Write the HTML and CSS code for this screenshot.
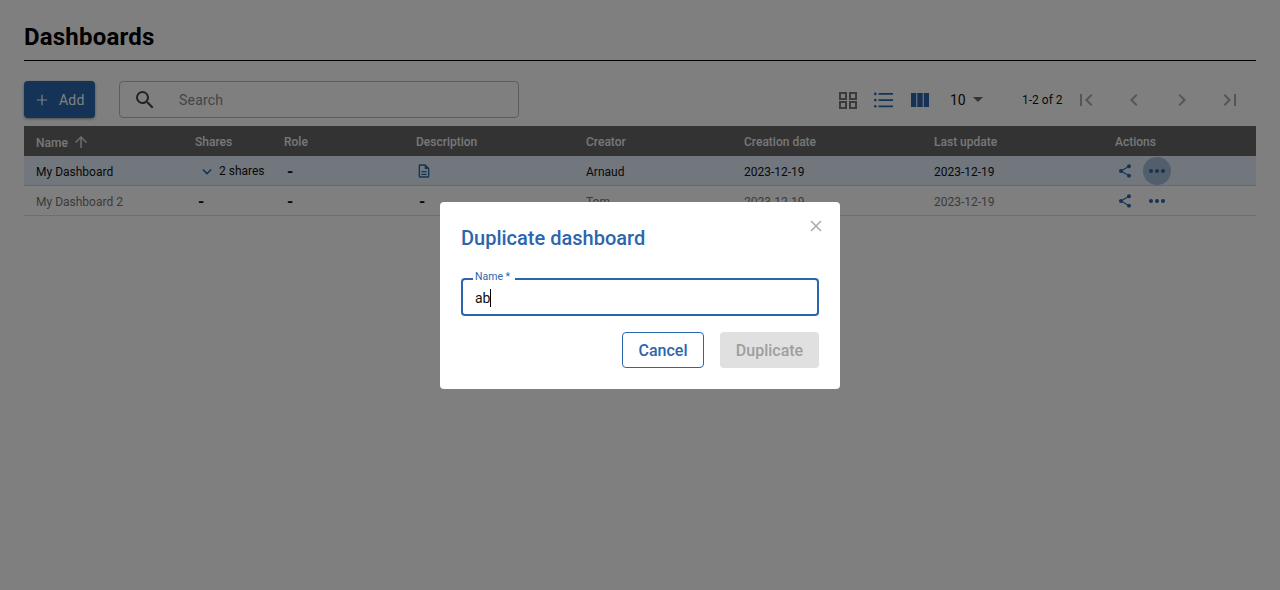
FILE: index.html
```html
<!DOCTYPE html>
<html lang="en">
<head>
    <meta charset="UTF-8">
    <title>Dashboards</title>
    <link rel="stylesheet" href="styles.css">
</head>
<body>
    <main class="page">
        <h1 class="page-title">Dashboards</h1>

        <div class="toolbar">
            <button class="add-btn">
                <svg class="add-icon" viewBox="0 0 14 14"><path d="M7 1v12M1 7h12"/></svg>
                Add
            </button>
            <div class="search">
                <svg class="search-icon" viewBox="0 0 24 24"><path d="M15.5 14h-.79l-.28-.27A6.47 6.47 0 0 0 16 9.5 6.5 6.5 0 1 0 9.5 16c1.61 0 3.09-.59 4.23-1.57l.27.28v.79l5 4.99L20.49 19l-4.99-5zm-6 0C7.01 14 5 11.99 5 9.5S7.01 5 9.5 5 14 7.01 14 9.5 11.99 14 9.5 14z"/></svg>
                <span class="search-text">Search</span>
            </div>
            <div class="views">
                <svg class="view-icon grey" viewBox="0 0 20 20"><path d="M2 3h6v6H2zM12 3h6v6h-6zM2 12h6v6H2zM12 12h6v6h-6z" fill="none" stroke="currentColor" stroke-width="2"/></svg>
                <svg class="view-icon" viewBox="0 0 20 20"><path d="M4.500 3h14.500v1.800H4.500zM4.500 9.200h14.500V11H4.500zM4.500 15.400h14.500v1.800H4.500z"/><circle cx="1.300" cy="3.900" r="1.300"/><circle cx="1.300" cy="10.100" r="1.300"/><circle cx="1.300" cy="16.300" r="1.300"/></svg>
                <svg class="view-icon" viewBox="0 0 20 20"><path d="M1 3h5.300v14H1zM7.300 3h5.400v14H7.300zM13.700 3H19v14h-5.300z"/></svg>
            </div>
            <div class="page-size">10 <span class="caret"></span></div>
            <div class="pager-count">1-2 of 2</div>
            <div class="pager">
                <svg class="pager-icon" viewBox="0 0 24 24"><path d="M18.410 16.590 13.820 12l4.590-4.590L17 6l-6 6 6 6zM6 6h2v12H6z"/></svg>
                <svg class="pager-icon" viewBox="0 0 24 24"><path d="M15.410 7.410 14 6l-6 6 6 6 1.410-1.410L10.830 12z"/></svg>
                <svg class="pager-icon" viewBox="0 0 24 24"><path d="M10 6 8.590 7.410 13.170 12l-4.580 4.590L10 18l6-6z"/></svg>
                <svg class="pager-icon" viewBox="0 0 24 24"><path d="M5.590 7.410 10.180 12l-4.590 4.590L7 18l6-6-6-6zM16 6h2v12h-2z"/></svg>
            </div>
        </div>

        <table class="grid">
            <colgroup>
                <col class="col-name"><col class="col-shares"><col class="col-role"><col class="col-desc">
                <col class="col-creator"><col class="col-created"><col class="col-updated"><col>
            </colgroup>
            <thead>
                <tr>
                    <th>Name <svg class="sort-icon" viewBox="0 0 24 24"><path d="m4 12 1.410 1.410L11 7.830V20h2V7.830l5.580 5.590L20 12l-8-8z"/></svg></th>
                    <th>Shares</th>
                    <th>Role</th>
                    <th>Description</th>
                    <th>Creator</th>
                    <th>Creation date</th>
                    <th>Last update</th>
                    <th>Actions</th>
                </tr>
            </thead>
            <tbody>
                <tr class="selected">
                    <td>My Dashboard</td>
                    <td class="shares-cell">
                        <svg class="chevron" viewBox="0 0 12 8"><path d="M1 1.500l5 5 5-5"/></svg>
                        2 shares
                    </td>
                    <td><span class="dash">-</span></td>
                    <td class="icon-cell">
                        <svg class="doc-icon" viewBox="0 0 24 24"><path d="M14 2H6c-1.100 0-2 .9-2 2v16c0 1.100.9 2 2 2h12c1.100 0 2-.9 2-2V8l-6-6zm4 18H6V4h7v5h5v11zM8 12h8v2H8zm0 4h8v2H8z"/></svg>
                    </td>
                    <td>Arnaud</td>
                    <td>2023-12-19</td>
                    <td>2023-12-19</td>
                    <td class="icon-cell">
                        <div class="actions">
                            <svg class="share-icon" viewBox="0 0 24 24"><path d="M18 16.080c-.76 0-1.440.3-1.960.77L8.910 12.700c.05-.23.09-.46.09-.7s-.04-.47-.09-.7l7.050-4.110c.54.5 1.250.81 2.040.81 1.660 0 3-1.340 3-3s-1.340-3-3-3-3 1.340-3 3c0 .24.04.47.09.7L8.040 9.810C7.500 9.310 6.790 9 6 9c-1.660 0-3 1.340-3 3s1.340 3 3 3c.79 0 1.500-.31 2.040-.81l7.120 4.160c-.05.21-.08.43-.08.650 0 1.610 1.310 2.920 2.920 2.920s2.920-1.310 2.920-2.920-1.310-2.920-2.920-2.920z"/></svg>
                            <span class="more more-active"><svg class="more-icon" viewBox="0 0 16 4"><circle cx="2" cy="2" r="2"/><circle cx="8" cy="2" r="2"/><circle cx="14" cy="2" r="2"/></svg></span>
                        </div>
                    </td>
                </tr>
                <tr class="muted">
                    <td>My Dashboard 2</td>
                    <td><span class="dash">-</span></td>
                    <td><span class="dash">-</span></td>
                    <td><span class="dash">-</span></td>
                    <td>Tom</td>
                    <td>2023-12-19</td>
                    <td>2023-12-19</td>
                    <td class="icon-cell">
                        <div class="actions">
                            <svg class="share-icon" viewBox="0 0 24 24"><path d="M18 16.080c-.76 0-1.440.3-1.960.77L8.910 12.700c.05-.23.09-.46.09-.7s-.04-.47-.09-.7l7.050-4.110c.54.5 1.250.81 2.040.81 1.660 0 3-1.340 3-3s-1.340-3-3-3-3 1.340-3 3c0 .24.04.47.09.7L8.040 9.810C7.500 9.310 6.790 9 6 9c-1.660 0-3 1.340-3 3s1.340 3 3 3c.79 0 1.500-.31 2.040-.81l7.120 4.160c-.05.21-.08.43-.08.650 0 1.610 1.310 2.920 2.920 2.920s2.920-1.310 2.920-2.920-1.310-2.920-2.920-2.920z"/></svg>
                            <span class="more"><svg class="more-icon" viewBox="0 0 16 4"><circle cx="2" cy="2" r="2"/><circle cx="8" cy="2" r="2"/><circle cx="14" cy="2" r="2"/></svg></span>
                        </div>
                    </td>
                </tr>
            </tbody>
        </table>
    </main>

    <div class="backdrop">
        <div class="dialog">
            <svg class="close-icon" viewBox="0 0 12 12"><path d="M1 1l10 10M11 1 1 11"/></svg>
            <h2 class="dialog-title">Duplicate dashboard</h2>
            <fieldset class="field">
                <legend class="field-label">Name *</legend>
                <span class="field-value">ab</span><span class="cursor"></span>
            </fieldset>
            <div class="dialog-actions">
                <button class="btn btn-cancel">Cancel</button>
                <button class="btn btn-disabled">Duplicate</button>
            </div>
        </div>
    </div>
</body>
</html>
```

FILE: styles.css
```css
* {
    box-sizing: border-box;
}
html, body {
    height: 100%;
}
body {
    margin: 0;
    background-color: #fff;
    font-family: Roboto, sans-serif;
    color: #000;
    overflow: hidden;
}
.page {
    padding: 20px 24px 0;
}
.page-title {
    margin: 0;
    height: 41px;
    border-bottom: 1px solid #000;
    font-size: 24px;
    line-height: 35px;
    font-weight: 700;
    letter-spacing: .2px;
}
.toolbar {
    display: flex;
    align-items: center;
    height: 37px;
    margin-top: 20px;
    margin-bottom: 8px;
}
.add-btn {
    display: flex;
    align-items: center;
    width: 71px;
    height: 37px;
    padding: 0 0 0 12px;
    border: none;
    border-radius: 4px;
    background-color: #2b66ad;
    color: #fff;
    font-family: inherit;
    font-size: 14px;
    font-weight: 400;
    letter-spacing: .2px;
    box-shadow: 0 1px 3px rgba(0, 0, 0, .4);
}
.add-icon {
    width: 12px;
    height: 12px;
    margin-right: 11px;
    fill: none;
    stroke: #fff;
    stroke-width: 1.4;
}
.search {
    display: flex;
    align-items: center;
    width: 400px;
    height: 37px;
    margin-left: 24px;
    border: 1px solid #bbb;
    border-radius: 4px;
}
.search-icon {
    width: 24px;
    height: 24px;
    margin-left: 13px;
    fill: #444;
}
.search-text {
    margin-left: 22px;
    font-size: 14px;
    color: #888;
    letter-spacing: .2px;
}
.views {
    display: flex;
    gap: 16px;
    margin-left: auto;
}
.view-icon {
    width: 20px;
    height: 20px;
    fill: #2b66ad;
    color: #2b66ad;
}
.view-icon.grey {
    color: #777;
}
.page-size {
    display: flex;
    align-items: center;
    width: 72px;
    margin-left: 20px;
    font-size: 14px;
    color: #111;
}
.caret {
    width: 0;
    height: 0;
    margin-left: 7px;
    border-left: 5px solid transparent;
    border-right: 5px solid transparent;
    border-top: 5px solid #666;
}
.pager-count {
    font-size: 12px;
    color: #111;
    width: 50px;
}
.pager {
    display: flex;
    gap: 24px;
    margin-left: 2px;
    margin-right: 14px;
}
.pager-icon {
    width: 24px;
    height: 24px;
    fill: #aaa;
}
.grid {
    width: 100%;
    table-layout: fixed;
    border-collapse: separate;
    border-spacing: 0;
    font-size: 12px;
}
.col-name { width: 159px; }
.col-shares { width: 89px; }
.col-role { width: 132px; }
.col-desc { width: 170px; }
.col-creator { width: 158px; }
.col-created { width: 190px; }
.col-updated { width: 181px; }
th {
    height: 30px;
    padding: 1px 12px 0;
    background-color: #666;
    color: #eee;
    text-align: left;
    font-weight: 500;
    white-space: nowrap;
}
.sort-icon {
    width: 18px;
    height: 18px;
    margin-left: 1px;
    vertical-align: -4px;
    fill: #ddd;
}
td {
    height: 30px;
    padding: 3px 12px 0;
    border-bottom: 1px solid #ddd;
    white-space: nowrap;
    color: #111;
}
td.icon-cell,
td.shares-cell {
    padding-top: 1px;
}
.selected td {
    background-color: #e4eefc;
    border-bottom-color: #ccd;
}
.muted td {
    color: #777;
}
.dash {
    margin-left: 3px;
    color: #111;
    font-size: 16px;
    font-weight: 700;
    line-height: 14px;
}
.shares-cell {
    padding-left: 19px;
}
.chevron {
    width: 10px;
    height: 7px;
    margin-right: 4px;
    fill: none;
    stroke: #2b66ad;
    stroke-width: 1.800;
}
.doc-icon {
    display: block;
    width: 16px;
    height: 16px;
    fill: #2b66ad;
}
.actions {
    display: flex;
    align-items: center;
    height: 28px;
    margin-left: 2px;
}
.share-icon {
    width: 16px;
    height: 16px;
    fill: #2b66ad;
}
.more {
    display: flex;
    align-items: center;
    justify-content: center;
    width: 28px;
    height: 28px;
    margin-left: 10px;
    border-radius: 50%;
}
.more-active {
    background-color: #a7bdd9;
}
.more-icon {
    width: 16px;
    height: 4px;
    fill: #2b66ad;
}
.backdrop {
    position: fixed;
    inset: 0;
    display: flex;
    align-items: center;
    justify-content: center;
    background-color: rgba(0, 0, 0, .5);
}
.dialog {
    position: relative;
    width: 400px;
    height: 187px;
    padding: 22px 21px 0;
    border-radius: 4px;
    background-color: #fff;
}
.close-icon {
    position: absolute;
    top: 18px;
    right: 18px;
    width: 12px;
    height: 12px;
    fill: none;
    stroke: #aaa;
    stroke-width: 1.500;
}
.dialog-title {
    margin: 0;
    font-size: 20px;
    line-height: 28px;
    font-weight: 500;
    color: #2b66ad;
}
.field {
    display: flex;
    align-items: center;
    height: 45px;
    margin: 19px 0 0;
    padding: 0 12px 5px;
    border: 2px solid #2b66ad;
    border-radius: 4px;
    font-size: 14px;
}
.field-label {
    margin-left: -2px;
    padding: 0 5px 4px 2px;
    font-size: 10.500px;
    line-height: 12px;
    color: #2b66ad;
}
.field-value {
    color: #111;
}
.cursor {
    display: inline-block;
    width: 1px;
    height: 18px;
    background-color: #000;
}
.dialog-actions {
    display: flex;
    justify-content: flex-end;
    gap: 16px;
    margin-top: 16px;
}
.btn {
    height: 36px;
    padding: 1px 0 0;
    border-radius: 4px;
    font-family: inherit;
    font-size: 16px;
    font-weight: 500;
}
.btn-cancel {
    width: 82px;
    border: 1px solid #2b66ad;
    background-color: #fff;
    color: #2b66ad;
}
.btn-disabled {
    width: 99px;
    border: none;
    background-color: #e0e0e0;
    color: #9e9e9e;
}
```
